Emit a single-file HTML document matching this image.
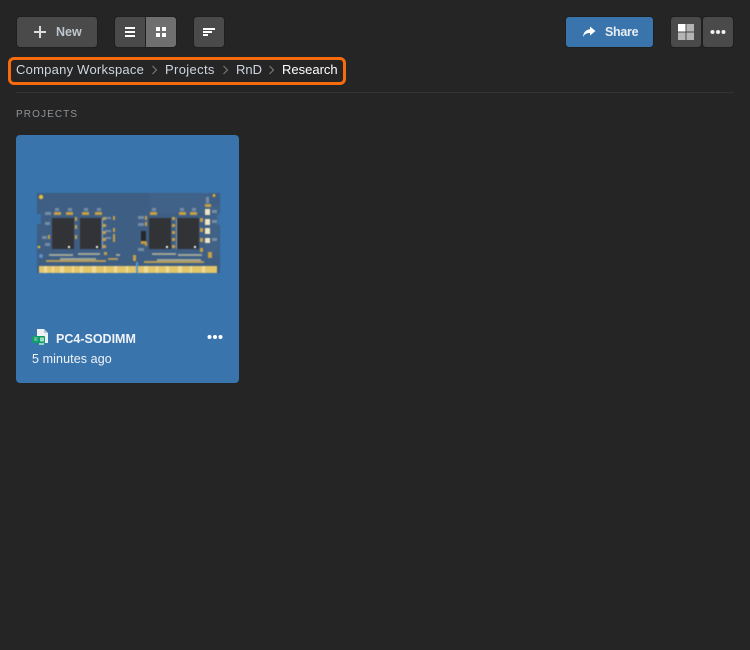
<!DOCTYPE html>
<html lang="en">
<head>
<meta charset="utf-8">
<title>Projects</title>
<style>
html,body{margin:0;padding:0;width:750px;height:650px;overflow:hidden;background:#252525}
body{position:relative;font-family:"Liberation Sans",sans-serif;color:#fff}
.a{position:absolute}
.btn{position:absolute;background:#4a4a4a;border:1px solid #1f1f1f;box-sizing:border-box;border-radius:4px}
.t{position:absolute;white-space:nowrap;line-height:16px}
svg{position:absolute;display:block}
</style>
</head>
<body>
<div class="btn" style="left:16px;top:16px;width:82px;height:32px"></div>
<svg style="left:34px;top:26px" width="12" height="12"><path d="M5 0h2v5h5v2H7v5H5V7H0V5h5z" fill="#dcdcdc"/></svg>
<div class="t" style="left:56px;top:24px;font-size:12.500px;font-weight:bold;color:#bfc5cc">New</div>

<div class="btn" style="left:114px;top:16px;width:32px;height:32px;border-radius:4px 0 0 4px"></div>
<div class="btn" style="left:145px;top:16px;width:32px;height:32px;border-radius:0 4px 4px 0;background:#6f6f6f"></div>
<svg style="left:125px;top:27px" width="11" height="11"><path d="M0 0h10v2H0zM0 4h10v2H0zM0 8h10v2H0z" fill="#fff"/></svg>
<svg style="left:156px;top:27px" width="11" height="11"><path d="M0 0h4v4H0zM6 0h4v4H6zM0 6h4v4H0zM6 6h4v4H6z" fill="#fff"/></svg>

<div class="btn" style="left:193px;top:16px;width:32px;height:32px"></div>
<svg style="left:203px;top:28px" width="13" height="9"><path d="M0 0h12v2H0zM0 3h9v2H0zM0 6h5v2H0z" fill="#fff"/></svg>

<div class="a" style="left:565px;top:16px;width:89px;height:32px;background:#3a74ad;border:1px solid #1f1f1f;box-sizing:border-box;border-radius:4px"></div>
<svg style="left:582px;top:26px" width="14" height="12"><path d="M8 .5l5.500 4.500L8 9.500V7C4.500 7 2.500 8.300 1 11 1.400 6.800 3.500 3.800 8 3.300z" fill="#fff"/></svg>
<div class="t" style="left:605px;top:24px;font-size:12.500px;font-weight:bold;letter-spacing:-.3px;color:#e8edf3">Share</div>

<div class="btn" style="left:670px;top:16px;width:32px;height:32px"></div>
<svg style="left:678px;top:24px" width="16" height="16"><path d="M0 0h7.500v7.500H0z" fill="#fff"/><path d="M8.500 0H16v7.500H8.500zM0 8.500h7.500V16H0zM8.500 8.500H16V16H8.500z" fill="#b4b4b4"/></svg>
<div class="btn" style="left:702px;top:16px;width:32px;height:32px"></div>
<svg style="left:710px;top:28px" width="16" height="8"><circle cx="2.500" cy="4" r="2" fill="#f0f0f0"/><circle cx="8" cy="4" r="2" fill="#f0f0f0"/><circle cx="13.500" cy="4" r="2" fill="#f0f0f0"/></svg>

<div class="a" style="left:8px;top:57px;width:338px;height:28px;box-sizing:border-box;border:3px solid #f76b0c;border-radius:6px"></div>
<div class="t" style="left:16px;top:62px;font-size:13px;letter-spacing:.24px;color:#ced6df">Company Workspace</div>
<svg style="left:151px;top:65px" width="7" height="10"><path d="M1.500 1l4 4-4 4" fill="none" stroke="#7c7c7c" stroke-width="1.100"/></svg>
<div class="t" style="left:165px;top:62px;font-size:13px;letter-spacing:.35px;color:#ced6df">Projects</div>
<svg style="left:222px;top:65px" width="7" height="10"><path d="M1.500 1l4 4-4 4" fill="none" stroke="#7c7c7c" stroke-width="1.100"/></svg>
<div class="t" style="left:236px;top:62px;font-size:13px;color:#ced6df">RnD</div>
<svg style="left:268px;top:65px" width="7" height="10"><path d="M1.500 1l4 4-4 4" fill="none" stroke="#7c7c7c" stroke-width="1.100"/></svg>
<div class="t" style="left:282px;top:62px;font-size:13px;color:#fff">Research</div>

<div class="a" style="left:16px;top:92px;width:718px;height:1px;background:#333"></div>
<div class="t" style="left:16px;top:107px;font-size:10px;letter-spacing:1.100px;color:#8f9499">PROJECTS</div>

<div class="a" style="left:16px;top:135px;width:223px;height:248px;background:#3a74ad;border-radius:4px"></div>

<svg style="left:30px;top:185px;filter:blur(.55px)" width="195" height="95" viewBox="30 185 195 95" shape-rendering="crispEdges">
  <path d="M38 193H220V214H217V225H220V273H37V224H41V214H37V193Z" fill="#3e5e84"/>
  <rect x="150" y="193" width="60" height="20" fill="#476a90" opacity=".35"/>
  <rect x="205" y="205" width="14" height="50" fill="#456688" opacity=".4"/>
  <!-- chips -->
  <rect x="52" y="218" width="22" height="31" fill="#323337"/>
  <rect x="80" y="218" width="21" height="31" fill="#323337"/>
  <rect x="149" y="218" width="22" height="31" fill="#323337"/>
  <rect x="177" y="218" width="22" height="31" fill="#323337"/>
  <rect x="68" y="246" width="2" height="2" fill="#fff"/>
  <rect x="96" y="246" width="2" height="2" fill="#fff"/>
  <rect x="166" y="246" width="2" height="2" fill="#fff"/>
  <rect x="194" y="246" width="2" height="2" fill="#fff"/>
  <rect x="102" y="218" width="1" height="31" fill="#8fa3b8"/>
  <rect x="176" y="218" width="1" height="31" fill="#8fa3b8"/>
  <!-- gold caps -->
  <g fill="#c99f45">
    <rect x="54" y="212" width="7" height="3"/><rect x="66" y="212" width="7" height="3"/>
    <rect x="82" y="212" width="7" height="3"/><rect x="95" y="212" width="7" height="3"/>
    <rect x="150" y="212" width="7" height="3"/><rect x="179" y="212" width="7" height="3"/>
    <rect x="190" y="212" width="7" height="3"/><rect x="205" y="204" width="6" height="3"/>
    <rect x="75" y="217" width="2" height="4"/><rect x="75" y="225" width="2" height="4"/><rect x="75" y="235" width="2" height="4"/>
    <rect x="103" y="217" width="3" height="3"/><rect x="103" y="224" width="3" height="3"/><rect x="103" y="231" width="3" height="3"/><rect x="103" y="238" width="3" height="3"/><rect x="103" y="245" width="3" height="3"/>
    <rect x="172" y="217" width="3" height="3"/><rect x="172" y="224" width="3" height="3"/><rect x="172" y="231" width="3" height="3"/><rect x="172" y="238" width="3" height="3"/><rect x="172" y="245" width="3" height="3"/>
    <rect x="104" y="252" width="3" height="3"/><rect x="48" y="235" width="2" height="4"/><rect x="145" y="216" width="2" height="4"/><rect x="145" y="222" width="2" height="4"/>
    <rect x="145" y="242" width="2" height="4"/><rect x="133" y="255" width="3" height="6"/><rect x="200" y="218" width="3" height="4"/><rect x="200" y="228" width="3" height="4"/>
    <rect x="200" y="238" width="3" height="4"/><rect x="200" y="248" width="3" height="4"/><rect x="208" y="252" width="4" height="6"/>
    <rect x="113" y="216" width="2" height="4"/><rect x="113" y="228" width="2" height="4"/><rect x="113" y="234" width="2" height="4"/><rect x="113" y="238" width="2" height="4"/>
  </g>
  <!-- white caps -->
  <g fill="#f1e6c4">
    <rect x="205" y="209" width="5" height="6"/><rect x="205" y="219" width="5" height="6"/>
    <rect x="205" y="228" width="5" height="6"/><rect x="205" y="238" width="5" height="5"/>
  </g>
  <rect x="141" y="231" width="5" height="10" fill="#25272a"/>
  <rect x="141" y="241" width="5" height="3" fill="#c79a3b"/>
  <!-- silkscreen -->
  <g fill="#8ea0b2" opacity=".7">
    <rect x="55" y="208" width="4" height="3"/><rect x="68" y="208" width="4" height="3"/><rect x="84" y="208" width="4" height="3"/><rect x="97" y="208" width="4" height="3"/>
    <rect x="152" y="208" width="4" height="3"/><rect x="180" y="208" width="4" height="3"/><rect x="192" y="208" width="4" height="3"/><rect x="206" y="197" width="3" height="6"/>
    <rect x="45" y="212" width="6" height="3"/><rect x="45" y="222" width="5" height="3"/><rect x="42" y="236" width="5" height="3"/><rect x="45" y="243" width="5" height="3"/>
    <rect x="105" y="217" width="6" height="2"/><rect x="105" y="230" width="6" height="2"/><rect x="105" y="237" width="6" height="2"/>
    <rect x="138" y="216" width="6" height="3"/><rect x="138" y="223" width="6" height="3"/><rect x="138" y="248" width="6" height="3"/>
    <rect x="212" y="210" width="5" height="3"/><rect x="212" y="220" width="5" height="3"/><rect x="212" y="238" width="5" height="3"/>
  </g>
  <!-- lower component band -->
  <g fill="#a0a698">
    <rect x="49" y="254" width="24" height="2"/><rect x="78" y="253" width="22" height="2"/><rect x="116" y="254" width="4" height="2"/>
    <rect x="152" y="253" width="24" height="2"/><rect x="178" y="254" width="24" height="2"/>
    <rect x="60" y="258" width="36" height="2"/><rect x="157" y="259" width="44" height="2"/>
  </g>
  <g fill="#b69a58">
    <rect x="46" y="260" width="60" height="2"/><rect x="108" y="258" width="10" height="2"/><rect x="144" y="261" width="60" height="2"/>
  </g>
  <circle cx="41" cy="197" r="2.200" fill="#e7bb38" shape-rendering="auto"/>
  <circle cx="214" cy="195.500" r="1.500" fill="#d8ae3c" shape-rendering="auto"/>
  <circle cx="39" cy="247" r="1.300" fill="#e7bb38" shape-rendering="auto"/>
  <circle cx="41" cy="256" r="2" fill="#5d92c6" shape-rendering="auto"/>
  <!-- gold fingers -->
  <rect x="39" y="266" width="178" height="7" fill="#e3c66a"/>
  <g fill="#eedb98">
    <rect x="44" y="266" width="3" height="7"/><rect x="52" y="266" width="2" height="7"/><rect x="60" y="266" width="4" height="7"/><rect x="72" y="266" width="2" height="7"/><rect x="80" y="266" width="3" height="7"/><rect x="92" y="266" width="4" height="7"/><rect x="104" y="266" width="2" height="7"/><rect x="114" y="266" width="3" height="7"/><rect x="126" y="266" width="2" height="7"/>
    <rect x="144" y="266" width="4" height="7"/><rect x="156" y="266" width="2" height="7"/><rect x="166" y="266" width="3" height="7"/><rect x="178" y="266" width="4" height="7"/><rect x="190" y="266" width="2" height="7"/><rect x="202" y="266" width="3" height="7"/>
  </g>
  <rect x="136" y="262" width="2" height="11" fill="#5d97cf"/>
</svg>

<svg style="left:32px;top:329px" width="17" height="17" viewBox="0 0 17 17">
  <path d="M5 0h7l4 4v10H5z" fill="#eef2f6"/>
  <path d="M12 0l4 4h-4z" fill="#bcc8d4"/>
  <rect x="0" y="7" width="13" height="7" rx="1" fill="#0f9d69"/>
  <path d="M2 8.500h3.500v1H2zM2 10.500h3.500v1H2zM8 8.500h4v4H8z" fill="#9fdcc4"/>
  <rect x="7" y="14" width="5" height="2" fill="#8fd6ba"/>
</svg>
<div class="t" style="left:56px;top:331px;font-size:12.500px;font-weight:bold;color:#f0f4f8">PC4-SODIMM</div>
<svg style="left:207px;top:333px" width="16" height="8"><circle cx="2.500" cy="4" r="2" fill="#fff"/><circle cx="8" cy="4" r="2" fill="#fff"/><circle cx="13.500" cy="4" r="2" fill="#fff"/></svg>
<div class="t" style="left:32px;top:351px;font-size:12.500px;letter-spacing:.1px;color:#f0f4f8">5 minutes ago</div>
</body>
</html>
